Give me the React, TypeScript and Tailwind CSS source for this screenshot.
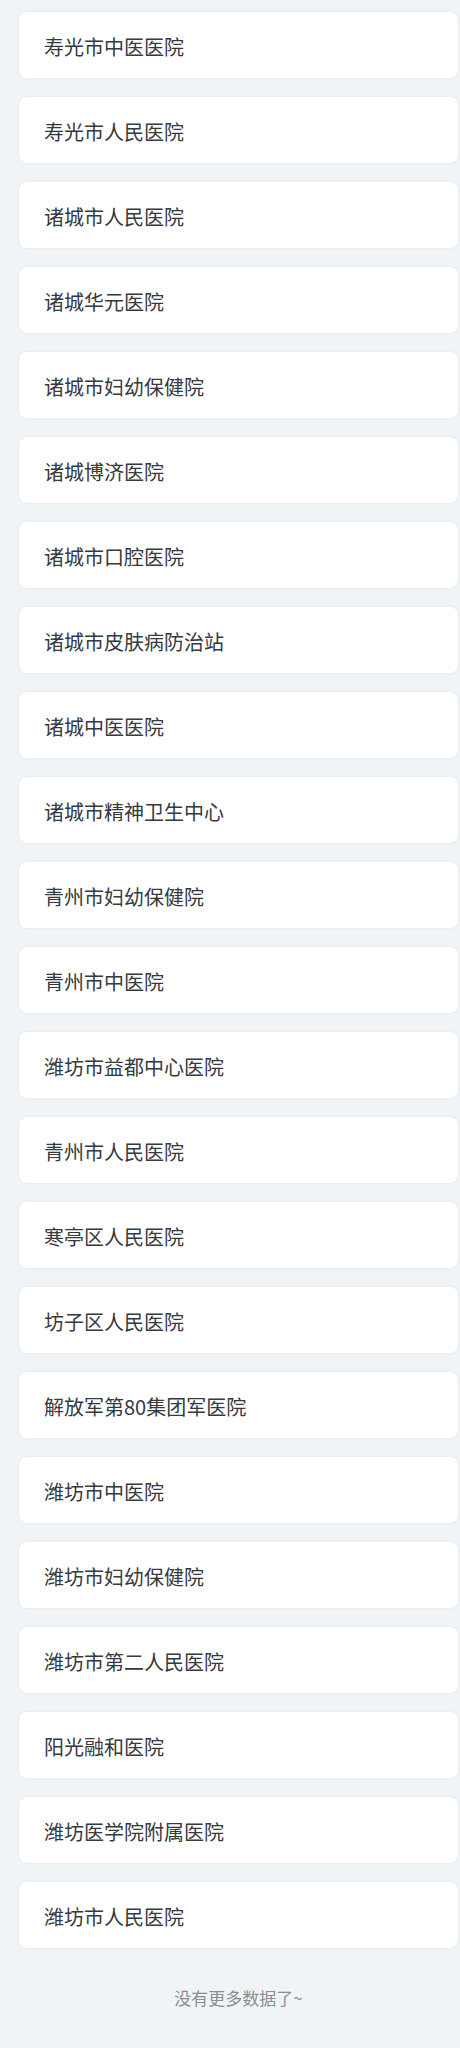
import React from 'react';

const hospitals = [
  '寿光市中医医院',
  '寿光市人民医院',
  '诸城市人民医院',
  '诸城华元医院',
  '诸城市妇幼保健院',
  '诸城博济医院',
  '诸城市口腔医院',
  '诸城市皮肤病防治站',
  '诸城中医医院',
  '诸城市精神卫生中心',
  '青州市妇幼保健院',
  '青州市中医院',
  '潍坊市益都中心医院',
  '青州市人民医院',
  '寒亭区人民医院',
  '坊子区人民医院',
  '解放军第80集团军医院',
  '潍坊市中医院',
  '潍坊市妇幼保健院',
  '潍坊市第二人民医院',
  '阳光融和医院',
  '潍坊医学院附属医院',
  '潍坊市人民医院',
];

const App: React.FC = () => {
  return (
    <div
      className="min-h-[2048px] bg-[#f0f4f7] pt-[12px] pb-[38px]"
      style={{ fontFamily: '"Noto Sans CJK SC", "Noto Sans", sans-serif' }}
    >
      <div className="ml-[19px] mr-[2px] flex flex-col gap-[19px]">
        {hospitals.map((name) => (
          <div
            key={name}
            className="h-[66px] flex items-center pl-[25px] pt-[3px] bg-white rounded-[8px] shadow-[0_0_3px_rgba(0,0,0,0.07)]"
          >
            <span className="text-[20px] leading-none text-[#36393d]">{name}</span>
          </div>
        ))}
        {/* Footer */}
        <p className="mt-[19px] text-center text-[17px] leading-[24px] text-[#8a8e94]">
          没有更多数据了~
        </p>
      </div>
    </div>
  );
};

export default App;
